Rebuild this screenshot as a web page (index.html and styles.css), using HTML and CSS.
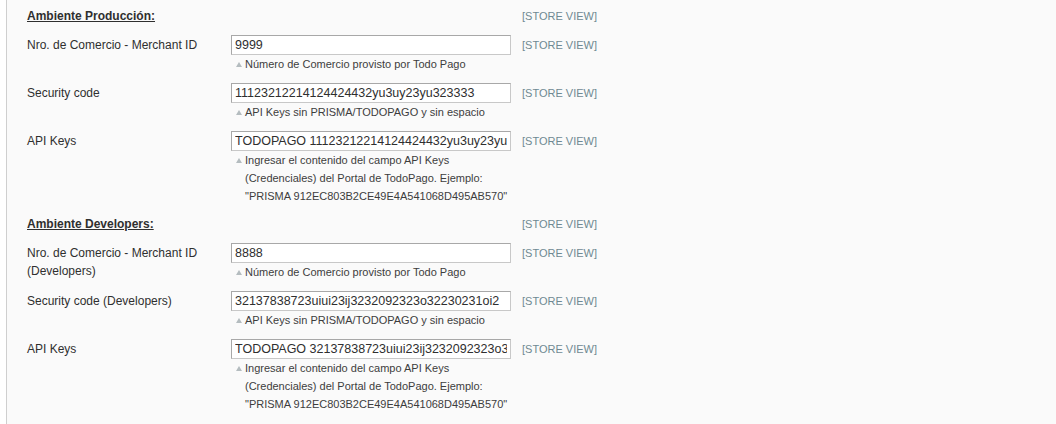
FILE: index.html
```html
<!DOCTYPE html>
<html lang="es">
<head>
<meta charset="utf-8">
<title>TodoPago</title>
<link rel="stylesheet" href="styles.css">
</head>
<body>
<div class="fieldset">
  <div class="form">
    <div class="row heading-row">
      <div class="heading">Ambiente Producción:</div>
      <div></div>
      <div class="scope">[STORE VIEW]</div>
    </div>
    <div class="row">
      <label class="label">Nro. de Comercio - Merchant ID</label>
      <div class="value">
        <input class="input-text" type="text" value="9999">
        <p class="note">Número de Comercio provisto por Todo Pago</p>
      </div>
      <div class="scope">[STORE VIEW]</div>
    </div>
    <div class="row">
      <label class="label">Security code</label>
      <div class="value">
        <input class="input-text" type="text" value="11123212214124424432yu3uy23yu323333">
        <p class="note">API Keys sin PRISMA/TODOPAGO y sin espacio</p>
      </div>
      <div class="scope">[STORE VIEW]</div>
    </div>
    <div class="row">
      <label class="label">API Keys</label>
      <div class="value">
        <input class="input-text" type="text" value="TODOPAGO 11123212214124424432yu3uy23yu323333">
        <p class="note">Ingresar el contenido del campo API Keys (Credenciales) del Portal de TodoPago. Ejemplo: "PRISMA 912EC803B2CE49E4A541068D495AB570"</p>
      </div>
      <div class="scope">[STORE VIEW]</div>
    </div>
    <div class="row heading-row">
      <div class="heading">Ambiente Developers:</div>
      <div></div>
      <div class="scope">[STORE VIEW]</div>
    </div>
    <div class="row">
      <label class="label">Nro. de Comercio - Merchant ID (Developers)</label>
      <div class="value">
        <input class="input-text" type="text" value="8888">
        <p class="note">Número de Comercio provisto por Todo Pago</p>
      </div>
      <div class="scope">[STORE VIEW]</div>
    </div>
    <div class="row">
      <label class="label">Security code (Developers)</label>
      <div class="value">
        <input class="input-text" type="text" value="32137838723uiui23ij3232092323o32230231oi2">
        <p class="note">API Keys sin PRISMA/TODOPAGO y sin espacio</p>
      </div>
      <div class="scope">[STORE VIEW]</div>
    </div>
    <div class="row">
      <label class="label">API Keys</label>
      <div class="value">
        <input class="input-text" type="text" value="TODOPAGO 32137838723uiui23ij3232092323o32230231oi2">
        <p class="note">Ingresar el contenido del campo API Keys (Credenciales) del Portal de TodoPago. Ejemplo: "PRISMA 912EC803B2CE49E4A541068D495AB570"</p>
      </div>
      <div class="scope">[STORE VIEW]</div>
    </div>
  </div>
</div>
</body>
</html>
```
FILE: styles.css
```css
html, body {
  margin: 0;
  padding: 0;
  background: #ffffff;
  font-family: "Liberation Sans", Arial, Helvetica, sans-serif;
  font-size: 12px;
  color: #2f2f2f;
}

.fieldset {
  margin-left: 6px;
  border-left: 1px solid #cfcfcf;
  background: #fafafa;
  min-height: 424px;
  box-sizing: border-box;
  padding: 7px 0 0 20px;
}

.form {
  display: flex;
  flex-direction: column;
  gap: 10px;
}

.row {
  display: grid;
  grid-template-columns: 204px 280px auto;
  align-items: start;
}

.heading {
  font-weight: bold;
  text-decoration: underline;
  line-height: 18px;
  color: #2f2f2f;
}

.heading-row .scope {
  padding-top: 0;
}

.label {
  display: block;
  width: 200px;
  line-height: 18px;
  padding-top: 1px;
  color: #2f2f2f;
}

.value {
  display: flex;
  flex-direction: column;
}

.input-text {
  box-sizing: border-box;
  width: 280px;
  height: 20px;
  margin: 0;
  padding: 0 3px;
  border: 1px solid;
  border-color: #a8a8a8 #c8c8c8 #c8c8c8 #a8a8a8;
  background: #ffffff;
  font-family: "Liberation Sans", Arial, Helvetica, sans-serif;
  font-size: 12.5px;
  color: #2f2f2f;
  outline: none;
}

.note {
  position: relative;
  margin: 0;
  padding-left: 14px;
  font-size: 11px;
  line-height: 18px;
  color: #3d3d3d;
}

.note::before {
  content: "";
  position: absolute;
  left: 5px;
  top: 7px;
  border-left: 3.5px solid transparent;
  border-right: 3.5px solid transparent;
  border-bottom: 5px solid #b4bcbf;
}

.scope {
  font-size: 11px;
  line-height: 18px;
  padding-top: 1px;
  padding-left: 11px;
  color: #6f8992;
  white-space: nowrap;
}
```
